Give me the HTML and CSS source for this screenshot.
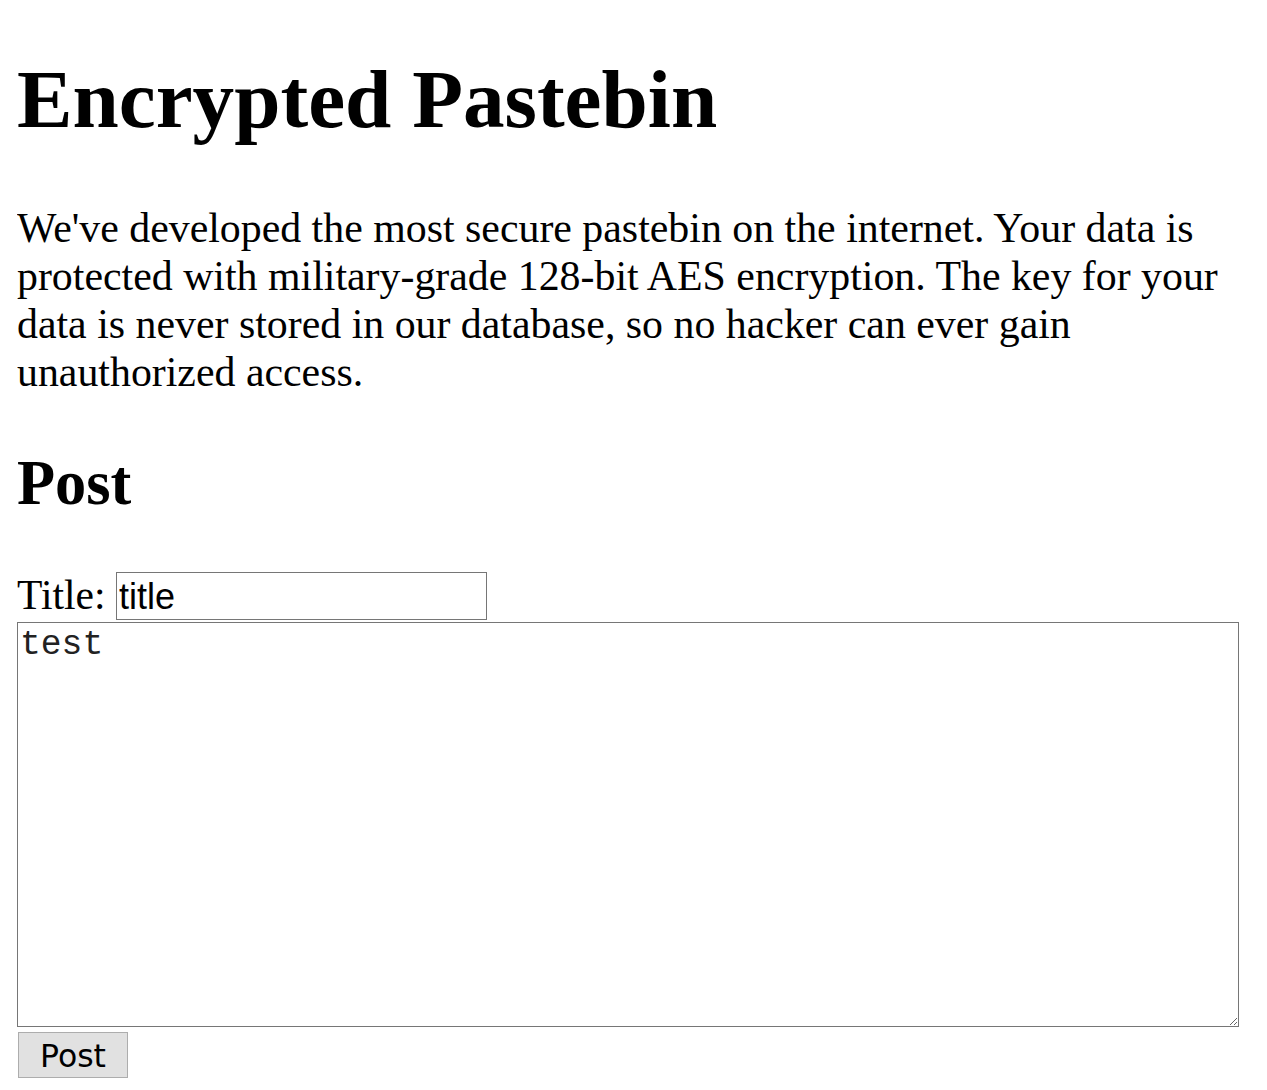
FILE: index.html
```html
<!DOCTYPE html>
<html>
<head>
<meta charset="utf-8">
<title>Encrypted Pastebin</title>
<link rel="stylesheet" href="styles.css">
</head>
<body>
<h1 class="title">Encrypted Pastebin</h1>
<p class="intro">We've developed the most secure pastebin on the internet. Your data is protected with military-grade 128-bit AES encryption. The key for your data is never stored in our database, so no hacker can ever gain unauthorized access.</p>
<h2 class="section">Post</h2>
<form class="post-form">
<div class="title-row">Title: <input class="title-input" type="text" name="title" value="title"></div>
<textarea class="body-input" name="body">test</textarea>
<button class="post-btn" type="button">Post</button>
</form>
</body>
</html>
```

FILE: styles.css
```css
html, body {
  background: #ffffff;
}
body {
  margin: 0 17px;
  font-family: "Liberation Serif", "Times New Roman", serif;
  font-size: 41.6px;
  color: #000;
}
.title {
  font-size: 83.2px;
  font-weight: bold;
  margin: 51px 0 57px;
  line-height: normal;
}
.intro {
  margin: 0;
  font-size: 41.85px;
  line-height: 48px;
}
.section {
  font-size: 62.4px;
  font-weight: bold;
  margin: 51px 0 52px;
  line-height: normal;
}
.post-form {
  margin: 0;
}
.title-row {
  line-height: normal;
}
.title-input {
  box-sizing: border-box;
  width: 371px;
  height: 48px;
  margin: 0;
  padding: 3px 2px 0;
  border: 1px solid #767676;
  border-radius: 0;
  font-family: "Liberation Sans", Arial, sans-serif;
  font-size: 36px;
  color: #000;
  background: #fff;
  vertical-align: baseline;
  outline: none;
}
.body-input {
  display: block;
  box-sizing: border-box;
  width: 1222px;
  height: 405px;
  margin: 2px 0 0;
  padding: 2px 2px 0;
  border: 1px solid #767676;
  border-radius: 0;
  font-family: "Liberation Mono", "Courier New", monospace;
  font-size: 34.67px;
  line-height: normal;
  color: #222;
  background: #fff;
  outline: none;
}
.post-btn {
  display: block;
  box-sizing: border-box;
  width: 110px;
  height: 46px;
  margin: 5px 0 0 1px;
  padding: 2px 0 0;
  border: 1px solid #adadad;
  border-radius: 0;
  background: #e1e1e1;
  font-family: "DejaVu Sans", Tahoma, sans-serif;
  font-size: 31.5px;
  color: #000;
}
```
